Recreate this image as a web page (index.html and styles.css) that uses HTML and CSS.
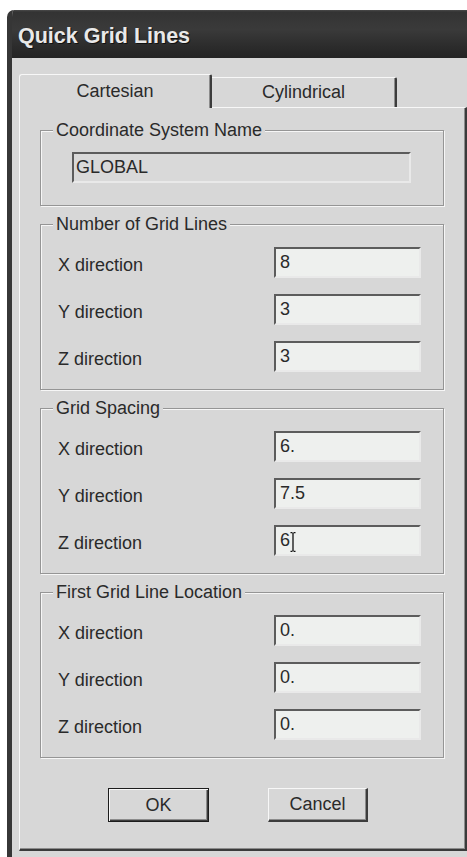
FILE: index.html
```html
<!DOCTYPE html>
<html lang="en">
<head>
<meta charset="utf-8">
<title>Quick Grid Lines</title>
<link rel="stylesheet" href="styles.css">
</head>
<body>
<div class="window">
  <div class="titlebar">Quick Grid Lines</div>
  <div class="client">
    <div class="tabs">
      <div class="tab active">Cartesian</div>
      <div class="tab">Cylindrical</div>
    </div>
    <div class="panel">
      <fieldset class="group group-name">
        <legend>Coordinate System Name</legend>
        <div class="field field-wide">GLOBAL</div>
      </fieldset>

      <fieldset class="group">
        <legend>Number of Grid Lines</legend>
        <div class="rows">
          <div class="row"><span class="label">X direction</span><div class="field">8</div></div>
          <div class="row"><span class="label">Y direction</span><div class="field">3</div></div>
          <div class="row"><span class="label">Z direction</span><div class="field">3</div></div>
        </div>
      </fieldset>

      <fieldset class="group">
        <legend>Grid Spacing</legend>
        <div class="rows">
          <div class="row"><span class="label">X direction</span><div class="field">6.</div></div>
          <div class="row"><span class="label">Y direction</span><div class="field">7.5</div></div>
          <div class="row"><span class="label">Z direction</span><div class="field">6<svg class="ibeam" width="6" height="20" viewBox="0 0 6 20"><path d="M0.5 0.5h2M3.5 0.5h2M3 1v18M0.5 19.5h2M3.5 19.5h2" stroke="#111" stroke-width="1.3" fill="none"/></svg></div></div>
        </div>
      </fieldset>

      <fieldset class="group">
        <legend>First Grid Line Location</legend>
        <div class="rows">
          <div class="row"><span class="label">X direction</span><div class="field">0.</div></div>
          <div class="row"><span class="label">Y direction</span><div class="field">0.</div></div>
          <div class="row"><span class="label">Z direction</span><div class="field">0.</div></div>
        </div>
      </fieldset>

      <div class="buttons">
        <button class="btn btn-default" type="button">OK</button>
        <button class="btn btn-cancel" type="button">Cancel</button>
      </div>
    </div>
  </div>
</div>
</body>
</html>
```

FILE: styles.css
```css
html, body {
  margin: 0;
  height: 857px;
  overflow: hidden;
  background: #ffffff;
}

body {
  font-family: "Liberation Sans", Arial, sans-serif;
  font-size: 18px;
  color: #2a2a2a;
}

/* dialog frame */
.window {
  margin: 10px 0 0 7px;
  width: 472px;
  box-sizing: border-box;
  border-left: 5px solid #363636;
  border-right: 5px solid #363636;
  border-top-left-radius: 7px;
  background: #d7d7d7;
  overflow: hidden;
}

.titlebar {
  height: 48px;
  box-sizing: border-box;
  padding: 5px 0 0 6px;
  line-height: 43px;
  font-weight: bold;
  font-size: 21.5px;
  color: #e9e9e9;
  text-shadow: 1px 1px 0 #111;
  background: linear-gradient(180deg, #4a4a4a 0, #333 2px, #3a3a3a 40%, #2b2b2b 78%, #242424 100%);
}

.client {
  padding: 16px 7px 10px 7px;
}

/* tab strip */
.tabs {
  display: flex;
  align-items: flex-end;
  height: 33px;
}

.tab {
  box-sizing: border-box;
  width: 185px;
  height: 30px;
  display: flex;
  align-items: center;
  justify-content: center;
  border-top: 1px solid #f7f7f7;
  border-right: 2px solid #3c3c3c;
  box-shadow: inset -1px 0 0 #8c8c8c;
  border-top-right-radius: 2px;
  background: #d7d7d7;
}

.tab.active {
  width: 193px;
  height: 34px;
  margin-bottom: -1px;
  position: relative;
  z-index: 1;
  border-left: 1px solid #f7f7f7;
  border-top-left-radius: 3px;
  padding-bottom: 1px;
}

/* tab page */
.panel {
  box-sizing: border-box;
  border-top: 1px solid #f7f7f7;
  border-left: 1px solid #f7f7f7;
  border-right: 2px solid #3a3a3a;
  border-bottom: 2px solid #3a3a3a;
  box-shadow: inset -1px -1px 0 #8c8c8c;
  padding: 12px 21px 27px 20px;
}

/* etched group boxes */
.group {
  margin: 0;
  min-width: 0;
  padding: 0 0 17px 0;
  border: 1px solid #959595;
  box-shadow: inset 1px 1px 0 #f6f6f6, 1px 1px 0 #f6f6f6;
}

.group + .group {
  margin-top: 8px;
}

.group-name {
  padding-bottom: 22px;
}

.group legend {
  margin-left: 12px;
  padding: 0 3px;
  height: 20px;
  line-height: 20px;
  background: #d7d7d7;
}

.rows {
  display: flex;
  flex-direction: column;
  gap: 16px;
  padding: 13px 0 0 17px;
}

.row {
  display: flex;
  align-items: center;
  height: 31px;
}

.label {
  width: 216px;
  padding-top: 5px;
}

/* sunken edit boxes */
.field {
  box-sizing: border-box;
  width: 147px;
  height: 31px;
  padding-left: 4px;
  line-height: 27px;
  border-top: 2px solid #5c5c5c;
  border-left: 2px solid #5c5c5c;
  border-right: 2px solid #e9e9e9;
  border-bottom: 2px solid #e9e9e9;
  background: #eef0ee;
  display: flex;
  align-items: center;
}

.field-wide {
  width: 339px;
  margin: 12px 0 0 31px;
  padding-left: 2px;
  background: #d9d9d9;
}

.ibeam {
  margin-left: 0;
  margin-top: 2px;
}

/* push buttons */
.buttons {
  display: flex;
  gap: 59px;
  padding-left: 68px;
  margin-top: 30px;
}

.btn {
  box-sizing: border-box;
  height: 34px;
  font: inherit;
  color: #2a2a2a;
  background: #d7d7d7;
  padding: 0;
  border-radius: 0;
}

.btn-default {
  width: 101px;
  border: 1px solid #1c1c1c;
  box-shadow: inset 1px 1px 0 #f7f7f7, inset -1px -1px 0 #3c3c3c, inset -2px -2px 0 #8c8c8c;
}

.btn-cancel {
  width: 100px;
  border-top: 1px solid #f7f7f7;
  border-left: 1px solid #f7f7f7;
  border-right: 2px solid #3c3c3c;
  border-bottom: 2px solid #3c3c3c;
  box-shadow: inset -1px -1px 0 #8c8c8c;
}
```
